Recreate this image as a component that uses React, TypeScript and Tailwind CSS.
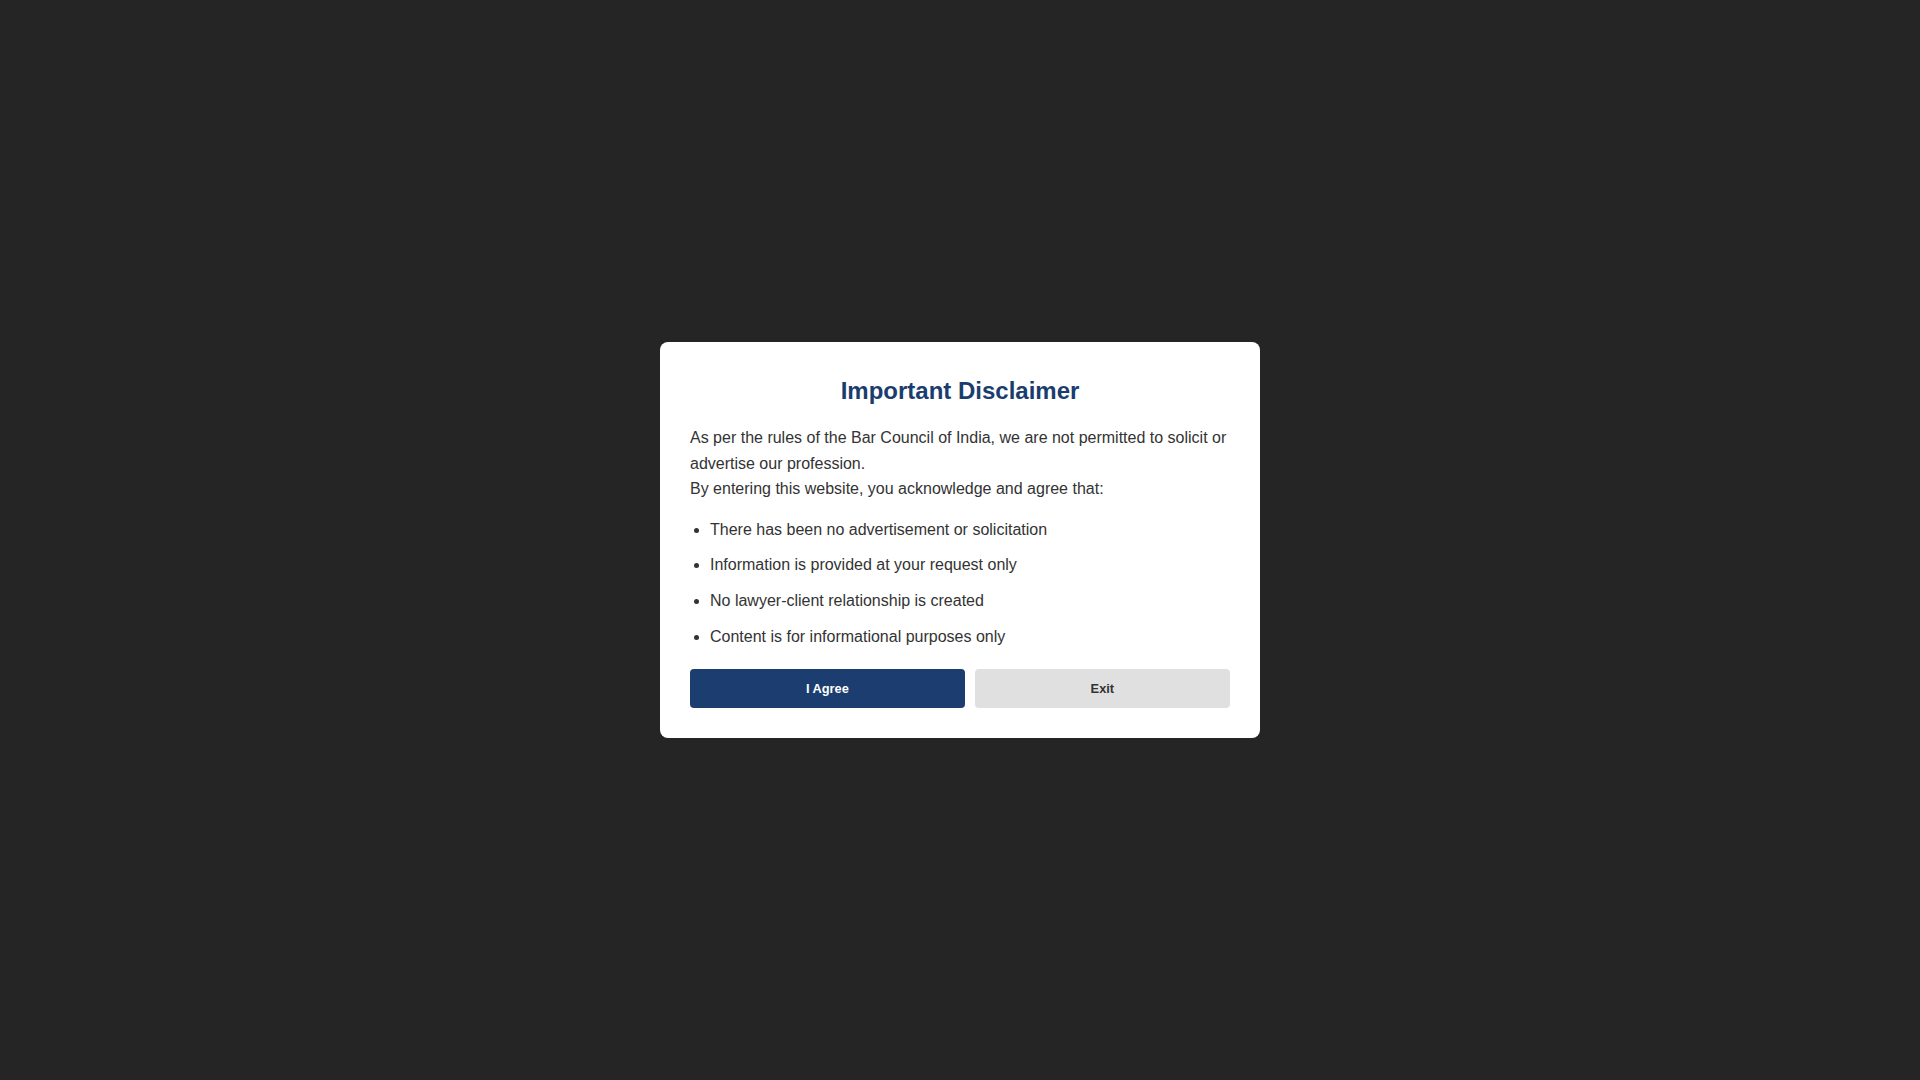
import React from 'react';

const points = [
  'There has been no advertisement or solicitation',
  'Information is provided at your request only',
  'No lawyer-client relationship is created',
  'Content is for informational purposes only',
];

export default function App() {
  return (
    <div
      className="flex min-h-screen w-full items-center justify-center bg-[#252525] text-[#333333]"
      style={{ fontFamily: '"Liberation Sans", Arial, sans-serif' }}
    >
      <div className="w-[600px] rounded-lg bg-white p-[30px]">
        <h2 className="mb-[15px] text-center text-[24px] font-bold leading-[1.6] text-[#1b3d6e]">
          Important Disclaimer
        </h2>
        <p className="text-[16px] leading-[1.6]">
          As per the rules of the Bar Council of India, we are not permitted to solicit or advertise our profession.
          <br />
          By entering this website, you acknowledge and agree that:
        </p>
        <ul className="mt-[15px] mb-5 list-disc space-y-[10px] pl-5 text-[16px] leading-[1.6]">
          {points.map((p) => (
            <li key={p}>{p}</li>
          ))}
        </ul>
        <div className="flex gap-[10px]">
          <button className="flex-auto cursor-pointer rounded bg-[#1b3d6f] px-5 py-3 text-[12.8px] font-bold leading-[normal] text-white">
            I Agree
          </button>
          <button className="flex-auto cursor-pointer rounded bg-[#e0e0e0] px-5 py-3 text-[12.8px] font-bold leading-[normal] text-[#333333]">
            Exit
          </button>
        </div>
      </div>
    </div>
  );
}
